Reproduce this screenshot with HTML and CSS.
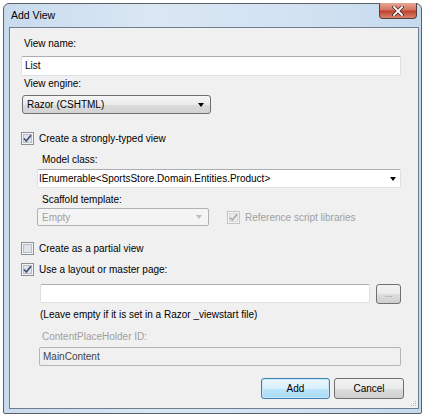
FILE: index.html
```html
<!DOCTYPE html>
<html lang="en">
<head>
    <meta charset="UTF-8">
    <title>Add View</title>
    <link rel="stylesheet" href="styles.css">
</head>
<body>
    <div class="window">
        <div class="titlebar">
            <span class="title">Add View</span>
            <div class="close">
                <svg width="12" height="10" viewBox="0 0 12 10">
                    <path d="M2 1 L10 9 M10 1 L2 9" stroke="#4a2a2a" stroke-width="3.4" stroke-linecap="square"/>
                    <path d="M2 1 L10 9 M10 1 L2 9" stroke="#fff" stroke-width="1.8" stroke-linecap="square"/>
                </svg>
            </div>
        </div>
        <div class="client">
            <div class="label first">View name:</div>
            <div class="textbox name">List</div>

            <div class="label engine">View engine:</div>
            <div class="dropdown engine-select">
                <span>Razor (CSHTML)</span>
                <span class="arrow"></span>
            </div>

            <div class="check-row strong">
                <svg class="check" width="13" height="13" viewBox="0 0 13 13">
                    <rect x="0.5" y="0.5" width="12" height="12" fill="#f4f4f4" stroke="#8e8f8f"/>
                    <rect x="2.5" y="2.5" width="8" height="8" fill="#dfe3ea" stroke="#b8bec8"/>
                    <path d="M3 6.5 L5.3 9 L10 3.3" fill="none" stroke="#43527a" stroke-width="1.8"/>
                </svg>
                <span>Create a strongly-typed view</span>
            </div>

            <div class="label indent model-label">Model class:</div>
            <div class="textbox combo model">
                <span>IEnumerable&lt;SportsStore.Domain.Entities.Product&gt;</span>
                <span class="arrow"></span>
            </div>

            <div class="label indent scaffold-label">Scaffold template:</div>
            <div class="scaffold-row">
                <div class="dropdown disabled scaffold">
                    <span>Empty</span>
                    <span class="arrow"></span>
                </div>
                <div class="check-row disabled-text">
                    <svg class="check" width="13" height="13" viewBox="0 0 13 13">
                        <rect x="0.5" y="0.5" width="12" height="12" fill="#f4f4f4" stroke="#c4c4c4"/>
                        <rect x="2.5" y="2.5" width="8" height="8" fill="#ececec" stroke="#d8d8d8"/>
                        <path d="M3 6.5 L5.3 9 L10 3.3" fill="none" stroke="#a8a8a8" stroke-width="1.6"/>
                    </svg>
                    <span>Reference script libraries</span>
                </div>
            </div>

            <div class="check-row partial">
                <svg class="check" width="13" height="13" viewBox="0 0 13 13">
                    <rect x="0.5" y="0.5" width="12" height="12" fill="#f4f4f4" stroke="#8e8f8f"/>
                    <rect x="2.5" y="2.5" width="8" height="8" fill="#dfe3ea" stroke="#b8bec8"/>
                </svg>
                <span>Create as a partial view</span>
            </div>

            <div class="check-row layout">
                <svg class="check" width="13" height="13" viewBox="0 0 13 13">
                    <rect x="0.5" y="0.5" width="12" height="12" fill="#f4f4f4" stroke="#8e8f8f"/>
                    <rect x="2.5" y="2.5" width="8" height="8" fill="#dfe3ea" stroke="#b8bec8"/>
                    <path d="M3 6.5 L5.3 9 L10 3.3" fill="none" stroke="#43527a" stroke-width="1.8"/>
                </svg>
                <span>Use a layout or master page:</span>
            </div>

            <div class="layout-row">
                <div class="textbox layout-path"></div>
                <div class="button browse">...</div>
            </div>
            <div class="note">(Leave empty if it is set in a Razor _viewstart file)</div>

            <div class="label indent disabled-text cph-label">ContentPlaceHolder ID:</div>
            <div class="textbox readonly cph">MainContent</div>

            <div class="actions">
                <div class="button default">Add</div>
                <div class="button">Cancel</div>
            </div>

            <svg class="grip" width="7" height="7" viewBox="0 0 7 7">
                <rect x="5" y="1" width="1" height="1" fill="#b8b8b8"/>
                <rect x="3" y="3" width="1" height="1" fill="#b8b8b8"/>
                <rect x="5" y="3" width="1" height="1" fill="#b8b8b8"/>
                <rect x="1" y="5" width="1" height="1" fill="#b8b8b8"/>
                <rect x="3" y="5" width="1" height="1" fill="#b8b8b8"/>
                <rect x="5" y="5" width="1" height="1" fill="#b8b8b8"/>
            </svg>
        </div>
    </div>
</body>
</html>
```

FILE: styles.css
```css
* {
    margin: 0;
    padding: 0;
    box-sizing: border-box;
}

body {
    font-family: 'Liberation Sans', Arial, sans-serif;
    font-size: 10px;
    color: #000;
    background-color: #fff;
}

.window {
    margin: 3px 0 0 3px;
    width: 419px;
    height: 411px;
    border: 1px solid #5c6066;
    border-radius: 6px 6px 2px 2px;
    background: linear-gradient(to right, #c8dbee, #dae7f4 35%, #d2e2f2 70%, #c6daee);
    display: flex;
    flex-direction: column;
}

.titlebar {
    height: 23px;
    display: flex;
    justify-content: space-between;
    align-items: flex-start;
    padding-left: 7px;
    padding-right: 4px;
}

.title {
    font-size: 10.5px;
    line-height: 22px;
}

.close {
    width: 38px;
    height: 16px;
    margin-top: -1px;
    border: 1px solid #5a3d3d;
    border-top: none;
    border-radius: 0 0 4px 4px;
    background: linear-gradient(to bottom, #e8a596, #d47565 45%, #c0412d 55%, #d9836a);
    display: flex;
    align-items: center;
    justify-content: center;
}

.client {
    flex: 1;
    position: relative;
    margin: 0 2px 4px 5px;
    border: 1px solid #6f7e90;
    background-color: #f0f0f0;
    padding: 8px 17px 0 11px;
}

.label {
    line-height: 15px;
    margin-left: 3px;
}

.label.indent {
    margin-left: 21px;
}

.textbox {
    height: 20px;
    background-color: #fff;
    border: 1px solid #dbdfe6;
    border-top-color: #abadb3;
    line-height: 18px;
    padding-left: 3px;
    border-radius: 2px;
}

.name {
    margin-top: 5px;
}

.engine {
    margin-top: 0;
}

.dropdown {
    height: 19px;
    border: 1px solid #707070;
    border-radius: 3px;
    background: linear-gradient(to bottom, #f6f6f6, #eaeaea 50%, #dcdcdc 51%, #d2d2d2);
    display: flex;
    align-items: center;
    justify-content: space-between;
    padding: 0 6px 0 4px;
}

.arrow {
    width: 0;
    height: 0;
    border-left: 3.5px solid transparent;
    border-right: 3.5px solid transparent;
    border-top: 4px solid #000;
}

.engine-select {
    margin-top: 4px;
    margin-left: 1px;
    width: 189px;
}

.check-row {
    display: flex;
    align-items: center;
    gap: 5px;
    line-height: 15px;
}

.check {
    flex-shrink: 0;
}

.strong {
    margin-top: 17px;
}

.model-label {
    margin-top: 6px;
}

.combo {
    display: flex;
    align-items: center;
    justify-content: space-between;
    padding-right: 4px;
    padding-left: 1px;
}

.model {
    margin-top: 2px;
    margin-left: 16px;
    height: 19px;
}

.scaffold-label {
    margin-top: 4px;
}

.scaffold-row {
    margin-top: 1px;
    margin-left: 16px;
    display: flex;
    align-items: center;
    gap: 18px;
}

.dropdown.disabled {
    background: #f4f4f4;
    border-color: #adb2b5;
    border-radius: 2px;
    color: #a0a0a0;
}

.dropdown.disabled .arrow {
    border-top-color: #bcbcbc;
}

.scaffold {
    width: 172px;
    height: 18px;
}

.disabled-text {
    color: #a0a0a0;
}

.partial {
    margin-top: 15px;
}

.layout {
    margin-top: 6px;
}

.layout-row {
    margin-top: 7px;
    margin-left: 19px;
    display: flex;
    gap: 6px;
}

.layout-path {
    width: 330px;
    height: 19px;
}

.button {
    height: 21px;
    border: 1px solid #707070;
    border-radius: 3px;
    background: linear-gradient(to bottom, #f2f2f2, #ebebeb 50%, #dddddd 51%, #cfcfcf);
    display: flex;
    align-items: center;
    justify-content: center;
    width: 70px;
}

.browse {
    width: 25px;
    height: 20px;
    color: #8a8a8a;
    font-size: 9px;
}

.note {
    margin-top: 3px;
    margin-left: 19px;
    line-height: 15px;
}

.cph-label {
    margin-top: 7px;
}

.readonly {
    background-color: #f0f0f0;
    border-color: #b4b4b4;
    color: #444;
}

.cph {
    margin-top: 3px;
    margin-left: 18px;
    height: 19px;
}

.actions {
    margin-top: 12px;
    margin-right: -3px;
    display: flex;
    justify-content: flex-end;
    gap: 4px;
}

.button.default {
    width: 69px;
    border-color: #3c7fb1;
    background: linear-gradient(to bottom, #eaf6fd, #d9f0fc 50%, #bee6fd 51%, #a7d9f5);
    box-shadow: inset 0 0 0 1px #c8e8fa;
}

.grip {
    position: absolute;
    right: 1px;
    bottom: 1px;
}
```
